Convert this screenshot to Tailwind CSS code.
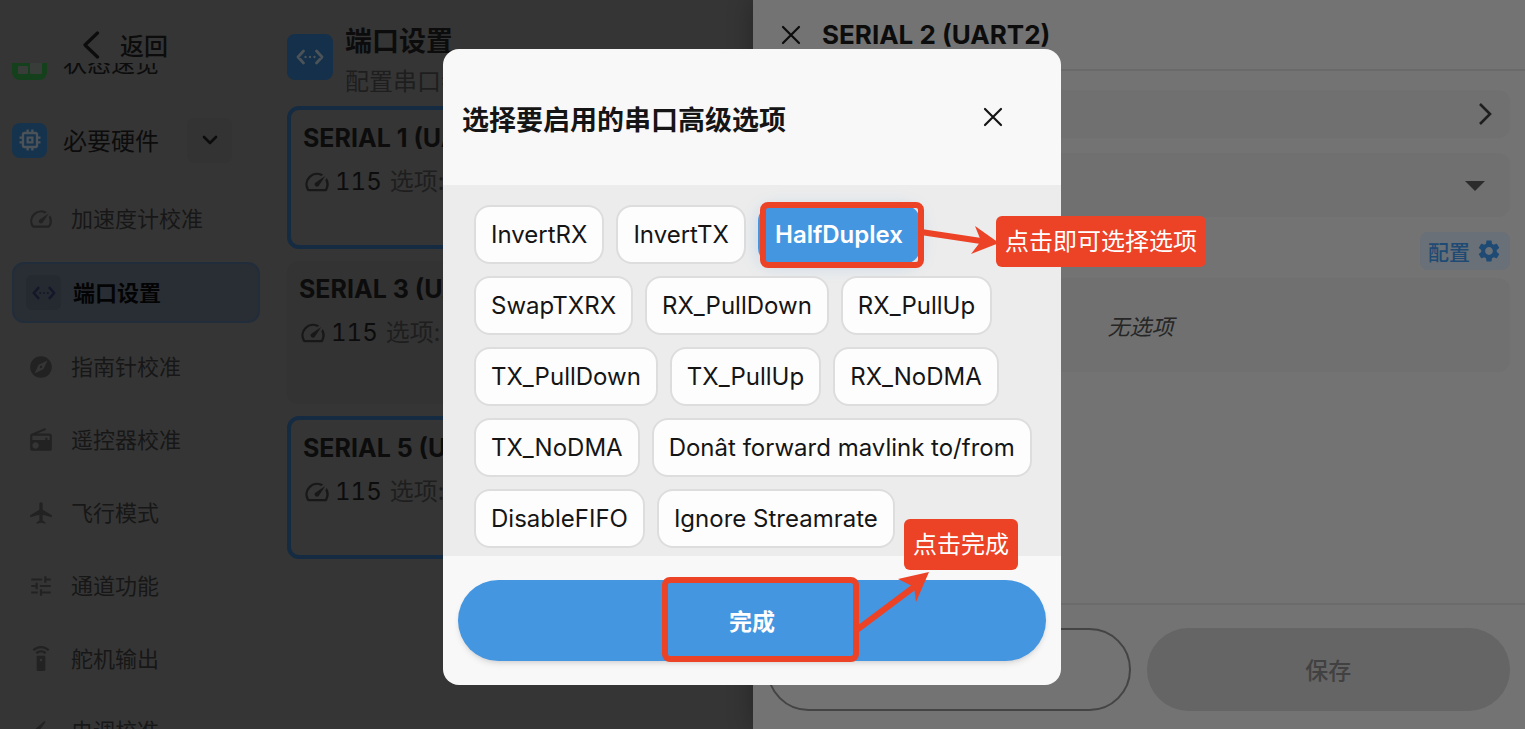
<!DOCTYPE html>
<html lang="zh-CN">
<head>
<meta charset="utf-8">
<meta name="viewport" content="width=device-width, initial-scale=1">
<title>端口设置</title>
<script src="https://cdn.jsdelivr.net/npm/@tailwindcss/browser@4"></script>
</head>
<body class="font-['Inter','Noto_Sans_CJK_SC',sans-serif] bg-[#353535] text-[#0c0c0c]">
<svg class="hidden" aria-hidden="true">
  <symbol id="gauge" viewBox="0 0 24 24"><path d="M20.38 8.57l-1.23 1.85a8 8 0 0 1-.22 7.58H5.07A8 8 0 0 1 15.58 6.85l1.85-1.23A10 10 0 0 0 3.35 19a2 2 0 0 0 1.72 1h13.85a2 2 0 0 0 1.74-1 10 10 0 0 0-.27-10.44zm-9.79 6.84a2 2 0 0 0 2.83 0l5.66-8.49-8.49 5.66a2 2 0 0 0 0 2.83z"/></symbol>
  <symbol id="port" viewBox="0 0 28 16"><g fill="none" stroke="currentColor" stroke-width="2.8" stroke-linecap="round" stroke-linejoin="round"><path d="M7.5 2L2 8l5.500 6M20.500 2L26 8l-5.500 6"/></g><g fill="currentColor"><circle cx="9.500" cy="8" r="1.200"/><circle cx="14" cy="8" r="1.200"/><circle cx="18.500" cy="8" r="1.200"/></g></symbol>
  <symbol id="cross" viewBox="0 0 20 20"><path d="M2 2l16 16M18 2L2 18" fill="none" stroke="currentColor" stroke-width="2.200" stroke-linecap="round"/></symbol>
</svg>

<div class="relative flex h-screen overflow-hidden">
  <!-- Sidebar -->
  <nav class="flex w-[272px] shrink-0 flex-col">
    <header class="flex h-[63px] shrink-0 items-center pt-[26px] pl-[82px]">
      <button class="flex items-center gap-5 text-2xl leading-9 font-medium">
        <svg class="h-7 w-[18px] fill-none stroke-current" viewBox="0 0 18 28" stroke-width="3.200" stroke-linecap="round" stroke-linejoin="round"><path d="M15.500 2L3 14l12.500 12"/></svg>
        <span class="pt-1">返回</span>
      </button>
    </header>
    <div class="min-h-0 flex-1 overflow-hidden px-3">
      <a href="#status" class="-mt-10 flex h-[78px] items-center gap-4 text-2xl">
        <svg class="size-[35px]" viewBox="0 0 35 35"><rect width="35" height="35" rx="8" fill="#14411b"/><g fill="#393d39"><rect x="6" y="5" width="10" height="13" rx="1"/><rect x="6" y="21" width="10" height="8" rx="1"/><rect x="18" y="5" width="12" height="24" rx="1"/></g></svg>
        <span class="pt-1">状态速览</span>
      </a>
      <div class="flex h-[78px] items-center gap-4 text-2xl">
        <span class="flex size-[35px] items-center justify-center rounded-lg bg-[#16334e]">
          <svg class="size-7 fill-[#4b5358]" viewBox="0 0 24 24"><path d="M15 9H9v6h6V9zm-2 4h-2v-2h2v2zm8-2V9h-2V7c0-1.100-.9-2-2-2h-2V3h-2v2h-2V3H9v2H7c-1.100 0-2 .9-2 2v2H3v2h2v2H3v2h2v2c0 1.100.9 2 2 2h2v2h2v-2h2v2h2v-2h2c1.100 0 2-.9 2-2v-2h2v-2h-2v-2h2zm-4 6H7V7h10v10z"/></svg>
        </span>
        <span class="w-[108px] pt-1">必要硬件</span>
        <button aria-label="收起" class="flex size-[45px] items-center justify-center rounded-lg bg-[#333333]">
          <svg class="h-[10px] w-4 fill-none stroke-current" viewBox="0 0 16 10" stroke-width="2.600" stroke-linecap="round" stroke-linejoin="round"><path d="M2 2l6 6 6-6"/></svg>
        </button>
      </div>
      <div class="flex flex-col gap-3 pt-[9px] text-[22px] text-[#171717]">
        <a href="#accel" class="flex h-[61px] items-center gap-[17px] pl-4"><svg class="size-[26px] fill-[#222222]"><use href="#gauge"/></svg><span class="pt-0.5">加速度计校准</span></a>
        <a href="#ports" class="my-px flex h-[61px] w-[248px] items-center gap-3 rounded-xl border-2 border-[#222d3b] bg-[#292e35] pl-3 font-bold text-[#040404]"><span class="flex size-[35px] items-center justify-center rounded-md bg-[#252930] text-[#14172a]"><svg class="h-[14px] w-6"><use href="#port"/></svg></span><span class="pt-0.5">端口设置</span></a>
        <a href="#compass" class="flex h-[61px] items-center gap-[17px] pl-4"><svg class="size-[26px] fill-[#222222]" viewBox="0 0 24 24"><path d="M12 10.900c-.61 0-1.100.49-1.100 1.100s.49 1.100 1.100 1.100c.61 0 1.100-.49 1.100-1.100s-.49-1.100-1.100-1.100zM12 2C6.480 2 2 6.480 2 12s4.480 10 10 10 10-4.480 10-10S17.520 2 12 2zm2.190 12.190L6 18l3.810-8.190L18 6l-3.810 8.190z"/></svg><span class="pt-0.5">指南针校准</span></a>
        <a href="#rc" class="flex h-[61px] items-center gap-[17px] pl-4"><svg class="size-[26px] fill-[#222222]" viewBox="0 0 24 24"><path d="M3.240 6.150C2.510 6.430 2 7.170 2 8v12c0 1.100.89 2 2 2h16c1.110 0 2-.9 2-2V8c0-1.110-.89-2-2-2H8.300l8.260-3.340L15.880 1 3.240 6.150zM7 20c-1.660 0-3-1.340-3-3s1.340-3 3-3 3 1.340 3 3-1.340 3-3 3zm13-8h-2v-2h-2v2H4V8h16v4z"/></svg><span class="pt-0.5">遥控器校准</span></a>
        <a href="#modes" class="flex h-[61px] items-center gap-[17px] pl-4"><svg class="size-[26px] fill-[#222222]" viewBox="0 0 24 24"><path d="M22 16v-2l-8.500-5V3.500c0-.83-.67-1.500-1.500-1.500s-1.500.67-1.500 1.500V9L2 14v2l8.500-2.500V19L8 20.500V22l4-1 4 1v-1.500L13.500 19v-5.500L22 16z"/></svg><span class="pt-0.5">飞行模式</span></a>
        <a href="#channels" class="flex h-[61px] items-center gap-[17px] pl-4"><svg class="size-[26px] fill-[#222222]" viewBox="0 0 24 24"><path d="M3 17v2h6v-2H3zM3 5v2h10V5H3zm10 16v-2h8v-2h-8v-2h-2v6h2zM7 9v2H3v2h4v2h2V9H7zm14 4v-2H11v2h10zm-6-4h2V7h4V5h-4V3h-2v6z"/></svg><span class="pt-0.5">通道功能</span></a>
        <a href="#servo" class="flex h-[61px] items-center gap-[17px] pl-4"><svg class="size-[26px] fill-[#222222]" viewBox="0 0 24 24"><path d="M15 9H9c-.55 0-1 .45-1 1v12c0 .55.45 1 1 1h6c.55 0 1-.45 1-1V10c0-.55-.45-1-1-1zm-3 5.200a1.200 1.200 0 1 1 0-2.400 1.200 1.200 0 0 1 0 2.400zM7.050 6.050l1.410 1.410C9.370 6.560 10.620 6 12 6s2.630.56 3.540 1.460l1.410-1.410C15.680 4.780 13.930 4 12 4s-3.680.78-4.950 2.050zM12 0C8.960 0 6.210 1.230 4.220 3.220l1.410 1.410C7.260 3.010 9.510 2 12 2s4.740 1.010 6.360 2.640l1.410-1.410C17.790 1.230 15.040 0 12 0z"/></svg><span class="pt-0.5">舵机输出</span></a>
        <a href="#esc" class="flex h-[61px] items-center gap-[17px] pl-4"><svg class="size-[26px] fill-[#222222]" viewBox="0 0 24 24"><path d="M14.690 2.210L4.330 11.490c-.64.58-.28 1.650.58 1.730L13 14l-4.850 6.760c-.22.31-.19.74.08 1.010.3.3.77.31 1.080.02l10.360-9.280c.64-.58.28-1.650-.58-1.730L11 10l4.850-6.760c.22-.31.19-.74-.08-1.010-.3-.3-.77-.31-1.080-.02z"/></svg><span>电调校准</span></a>
      </div>
    </div>
  </nav>

  <!-- Port list -->
  <main class="min-w-0 flex-1 px-[15px]">
    <header class="flex h-[106px] gap-3 pt-[22px]">
      <span class="mt-3 flex size-[46px] items-center justify-center rounded-lg bg-[#14304a] text-[#4b5358]"><svg class="h-4 w-7"><use href="#port"/></svg></span>
      <div>
        <h1 class="text-[27px] leading-10 font-bold">端口设置</h1>
        <p class="text-2xl leading-10 text-[#1e1e1e]">配置串口参数</p>
      </div>
    </header>
    <div class="flex flex-col gap-3">
      <section class="h-[143px] rounded-xl border-4 border-[#142b42] p-3">
        <h2 class="text-[25px] leading-8 font-bold">SERIAL 1 (UART1)</h2>
        <p class="mt-3 flex items-center text-2xl leading-8 tabular-nums"><svg class="mr-1 size-7 fill-[#181818]"><use href="#gauge"/></svg>115<span class="ml-2 text-[#1e1e1e]">选项:</span></p>
      </section>
      <section class="h-[143px] rounded-xl bg-[#333333] p-3">
        <h2 class="text-[25px] leading-8 font-bold">SERIAL 3 (UART3)</h2>
        <p class="mt-3 flex items-center text-2xl leading-8 tabular-nums"><svg class="mr-1 size-7 fill-[#181818]"><use href="#gauge"/></svg>115<span class="ml-2 text-[#1e1e1e]">选项:</span></p>
      </section>
      <section class="h-[143px] rounded-xl border-4 border-[#142b42] p-3">
        <h2 class="text-[25px] leading-8 font-bold">SERIAL 5 (UART5)</h2>
        <p class="mt-3 flex items-center text-2xl leading-8 tabular-nums"><svg class="mr-1 size-7 fill-[#181818]"><use href="#gauge"/></svg>115<span class="ml-2 text-[#1e1e1e]">选项:</span></p>
      </section>
    </div>
  </main>

  <!-- Port drawer, slides over the list -->
  <aside class="absolute inset-y-0 right-0 flex w-[772px] max-w-full flex-col bg-[#737373] shadow-[0_0_24px_rgba(0,0,0,0.3)]">
    <header class="flex h-[71px] items-center gap-[21px] border-b-2 border-[#6a6a6a] pl-7">
      <button aria-label="关闭" class="size-5"><svg class="size-5"><use href="#cross"/></svg></button>
      <h2 class="text-[26px] font-bold">SERIAL 2 (UART2)</h2>
    </header>
    <div class="flex flex-1 flex-col pt-[19px] pr-[15px] pl-[14px]">
      <button aria-label="协议" class="flex h-12 items-center justify-end rounded-xl bg-[#707070] pr-[17px]">
        <svg class="h-6 w-[15px] fill-none stroke-[#1e1e1e]" viewBox="0 0 15 24" stroke-width="2.600"><path d="M2 2l10 10L2 22"/></svg>
      </button>
      <div class="relative mt-[15px]">
        <select aria-label="波特率" class="h-16 w-full appearance-none rounded-xl bg-[#707070] px-4"><option></option></select>
        <svg class="pointer-events-none absolute top-7 right-[25px] h-[10px] w-5 fill-[#2c2c2c]" viewBox="0 0 20 10"><path d="M0 0h20L10 10z"/></svg>
      </div>
      <button class="mt-[15px] flex h-[38px] items-center gap-[6px] self-end rounded-lg bg-[#697077] px-2 text-[21px] font-medium text-[#1e4a74]"><span class="pt-1">配置</span>
        <svg class="size-[26px] fill-current" viewBox="0 0 24 24"><path d="M19.140 12.940c.04-.3.06-.61.06-.94 0-.32-.02-.64-.07-.94l2.030-1.580c.18-.14.23-.41.12-.61l-1.920-3.320c-.12-.22-.37-.29-.59-.22l-2.390.96c-.5-.38-1.030-.7-1.620-.94l-.36-2.540c-.04-.24-.24-.41-.48-.41h-3.840c-.24 0-.43.17-.47.41l-.36 2.540c-.59.24-1.130.57-1.620.94l-2.390-.96c-.22-.08-.47 0-.59.22L2.740 8.870c-.12.21-.08.47.12.61l2.030 1.580c-.05.3-.09.63-.09.94s.02.64.07.94l-2.030 1.580c-.18.14-.23.41-.12.61l1.920 3.320c.12.22.37.29.59.22l2.390-.96c.5.38 1.030.7 1.620.94l.36 2.540c.05.24.24.41.48.41h3.840c.24 0 .44-.17.47-.41l.36-2.540c.59-.24 1.130-.56 1.620-.94l2.390.96c.22.08.47 0 .59-.22l1.920-3.320c.12-.22.07-.47-.12-.61l-2.010-1.580zM12 15.600c-1.980 0-3.600-1.620-3.600-3.600s1.620-3.600 3.600-3.600 3.600 1.620 3.600 3.600-1.620 3.600-3.600 3.600z"/></svg>
      </button>
      <div class="mt-2 flex h-[94px] items-center justify-center rounded-xl bg-[#707070] pt-1 pl-1 text-[22px] text-[#262626] italic">无选项</div>
    </div>
    <footer class="grid grid-cols-2 gap-4 border-t-2 border-[#6b6b6b] pt-[23px] pr-[15px] pb-[18px] pl-[14px]">
      <button aria-label="取消" class="h-[83px] rounded-full border-2 border-[#444444]"></button>
      <button class="h-[83px] rounded-full bg-[#656565] pt-1 text-[23px] font-medium text-[#414141]" disabled>保存</button>
    </footer>
  </aside>

  <!-- Advanced options dialog -->
  <div class="absolute inset-0 flex items-center justify-center pt-[5px] pr-[21px]">
    <div role="dialog" aria-labelledby="dlg" class="relative w-[618px] rounded-2xl bg-[#f8f8f8] text-[#151515]">
      <header class="flex h-[136px] items-center justify-between pr-[58px] pl-[19px]">
        <h2 id="dlg" class="pt-2 text-[27px] font-bold">选择要启用的串口高级选项</h2>
        <button aria-label="关闭" class="size-5"><svg class="size-5"><use href="#cross"/></svg></button>
      </header>
      <div class="flex flex-wrap gap-3 bg-[#ececec] pt-5 pr-6 pb-2 pl-[31px] text-2xl">
        <button class="h-[59px] rounded-2xl border-2 border-[#dddddd] bg-[#fdfdfd] px-[15px]">InvertRX</button>
        <button class="h-[59px] rounded-2xl border-2 border-[#dddddd] bg-[#fdfdfd] px-[15px]">InvertTX</button>
        <button aria-pressed="true" class="h-[59px] rounded-2xl bg-[#4496e1] px-[17px] font-semibold text-white shadow-[0_2px_16px_rgba(68,150,225,0.25)]">HalfDuplex</button>
        <button class="h-[59px] rounded-2xl border-2 border-[#dddddd] bg-[#fdfdfd] px-[15px]">SwapTXRX</button>
        <button class="h-[59px] rounded-2xl border-2 border-[#dddddd] bg-[#fdfdfd] px-[15px]">RX_PullDown</button>
        <button class="h-[59px] rounded-2xl border-2 border-[#dddddd] bg-[#fdfdfd] px-[15px]">RX_PullUp</button>
        <button class="h-[59px] rounded-2xl border-2 border-[#dddddd] bg-[#fdfdfd] px-[15px]">TX_PullDown</button>
        <button class="h-[59px] rounded-2xl border-2 border-[#dddddd] bg-[#fdfdfd] px-[15px]">TX_PullUp</button>
        <button class="h-[59px] rounded-2xl border-2 border-[#dddddd] bg-[#fdfdfd] px-[15px]">RX_NoDMA</button>
        <button class="h-[59px] rounded-2xl border-2 border-[#dddddd] bg-[#fdfdfd] px-[15px]">TX_NoDMA</button>
        <button class="h-[59px] rounded-2xl border-2 border-[#dddddd] bg-[#fdfdfd] px-[15px]">Donât forward mavlink to/from</button>
        <button class="h-[59px] rounded-2xl border-2 border-[#dddddd] bg-[#fdfdfd] px-[15px]">DisableFIFO</button>
        <button class="h-[59px] rounded-2xl border-2 border-[#dddddd] bg-[#fdfdfd] px-[15px]">Ignore Streamrate</button>
      </div>
      <footer class="px-[15px] pt-6 pb-6">
        <button class="h-[81px] w-full rounded-full bg-[#4496e1] pt-1 text-[23px] font-bold text-white shadow-md">完成</button>
      </footer>

      <!-- Callouts -->
      <span class="pointer-events-none absolute top-[153px] left-[317px] h-[66px] w-[164px] rounded-lg border-6 border-[#ec4226]"></span>
      <span class="pointer-events-none absolute top-[528px] left-[219px] h-[85px] w-[197px] rounded-lg border-6 border-[#ec4226]"></span>
      <svg class="pointer-events-none absolute inset-0 size-full overflow-visible" fill="#ec4226" stroke="#ec4226">
        <path stroke-width="6" stroke-linecap="round" d="M478 183l60 9M415 580l56-42"/>
        <path stroke="none" d="M556 194l-24-17 6 15-10 13zM486 523l-31 7 16 8 2 15z"/>
      </svg>
      <span class="absolute top-[167px] left-[553px] rounded-md bg-[#ec4226] px-[9px] py-[7px] text-2xl leading-[37px] whitespace-nowrap text-white">点击即可选择选项</span>
      <span class="absolute top-[470px] left-[461px] rounded-md bg-[#ec4226] px-[9px] py-[7px] text-2xl leading-[37px] whitespace-nowrap text-white">点击完成</span>
    </div>
  </div>
</div>
</body>
</html>
